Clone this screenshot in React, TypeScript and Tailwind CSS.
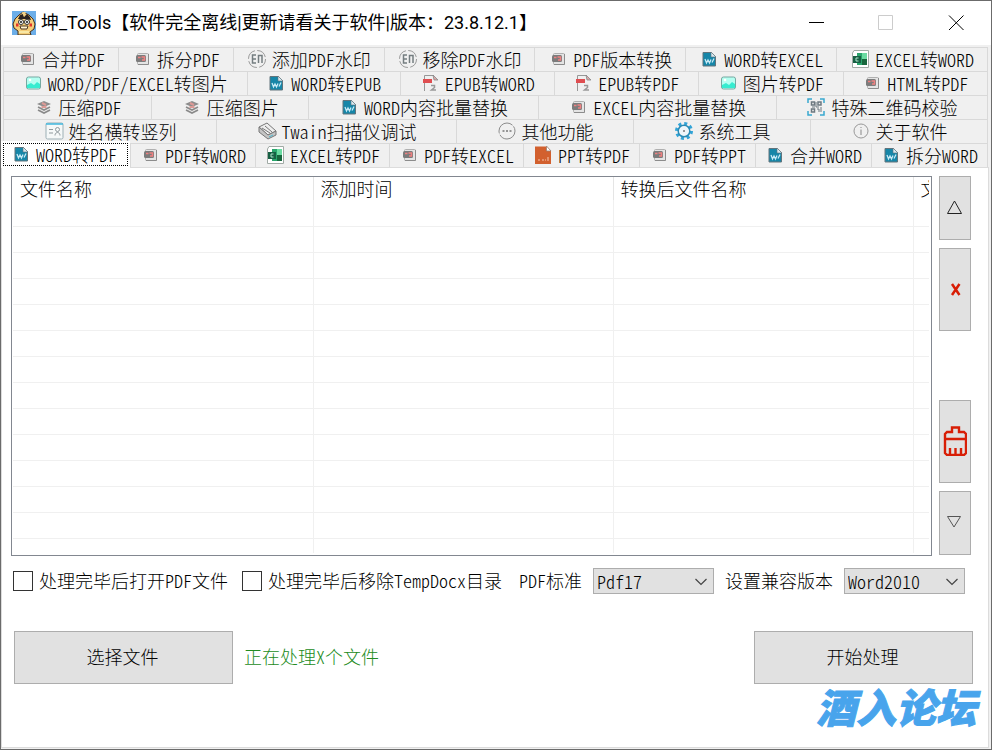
import { useState } from "react";
import type { ReactNode } from "react";

type IconName =
  | "pdf" | "watermark" | "word" | "excel" | "image" | "epub" | "compress"
  | "idcard" | "scanner" | "more" | "gear" | "qr" | "info" | "ppt";

type Tab = { label: string; icon: IconName };

const TAB_ROWS: Tab[][] = [
  [
    { label: "合并PDF", icon: "pdf" },
    { label: "拆分PDF", icon: "pdf" },
    { label: "添加PDF水印", icon: "watermark" },
    { label: "移除PDF水印", icon: "watermark" },
    { label: "PDF版本转换", icon: "pdf" },
    { label: "WORD转EXCEL", icon: "word" },
    { label: "EXCEL转WORD", icon: "excel" },
  ],
  [
    { label: "WORD/PDF/EXCEL转图片", icon: "image" },
    { label: "WORD转EPUB", icon: "word" },
    { label: "EPUB转WORD", icon: "epub" },
    { label: "EPUB转PDF", icon: "epub" },
    { label: "图片转PDF", icon: "image" },
    { label: "HTML转PDF", icon: "pdf" },
  ],
  [
    { label: "压缩PDF", icon: "compress" },
    { label: "压缩图片", icon: "compress" },
    { label: "WORD内容批量替换", icon: "word" },
    { label: "EXCEL内容批量替换", icon: "pdf" },
    { label: "特殊二维码校验", icon: "qr" },
  ],
  [
    { label: "姓名横转竖列", icon: "idcard" },
    { label: "Twain扫描仪调试", icon: "scanner" },
    { label: "其他功能", icon: "more" },
    { label: "系统工具", icon: "gear" },
    { label: "关于软件", icon: "info" },
  ],
  [
    { label: "WORD转PDF", icon: "word" },
    { label: "PDF转WORD", icon: "pdf" },
    { label: "EXCEL转PDF", icon: "excel" },
    { label: "PDF转EXCEL", icon: "pdf" },
    { label: "PPT转PDF", icon: "ppt" },
    { label: "PDF转PPT", icon: "pdf" },
    { label: "合并WORD", icon: "word" },
    { label: "拆分WORD", icon: "word" },
  ],
];

const ICONS: Record<IconName, ReactNode> = {
  pdf: (
    <>
      <rect x="7.500" y="6.500" width="11" height="11" rx="1" fill="#e4e4e4" stroke="#b0b0b0" />
      <path d="M18.500 7v10.500H8" fill="none" stroke="#8c8c8c" />
      <rect x="6" y="8" width="10" height="7" rx="1.500" fill="#7c7c7c" />
      <path d="M8 10.500h2.500M11.500 10h3v3H12" fill="none" stroke="#f08080" strokeWidth="1.500" />
    </>
  ),
  watermark: (
    <>
      <circle cx="12" cy="12" r="8.500" fill="none" stroke="#9a9a9a" strokeDasharray="11 2.350" />
      <path d="M11 8H7.500v8H11M7.500 12H11M13.500 16V8.500h3.500V16" fill="none" stroke="#747d80" strokeWidth="1.500" />
    </>
  ),
  word: (
    <>
      <path d="M6 5.500h8.500l4 4v9.500H6z" fill="#1686a8" stroke="#62747c" />
      <path d="M14 5v5h5z" fill="#d7e9f0" stroke="#62747c" strokeWidth=".6" />
      <path d="M8 12l1.500 4 1.500-3 1.500 3 1.500-3.500M15 15.500l2-4" fill="none" stroke="#c8eaf6" strokeWidth="1.300" />
    </>
  ),
  excel: (
    <>
      <path d="M6 3.500h14.500v17h-16V6z" fill="#fff" stroke="#a0aaa5" />
      <path d="M9 6h10v12H9z" fill="#29a56c" />
      <path d="M14 6h5v6h-5z" fill="#6bdba2" />
      <path d="M14 12h5v6h-5z" fill="#17663d" />
      <path d="M5 9h8v7H5z" fill="#176044" />
      <path d="M10.500 11H8v3h2.500" fill="none" stroke="#aee5cb" />
    </>
  ),
  image: (
    <>
      <rect x="5.500" y="6" width="14" height="12" rx="2" fill="#b5fff1" stroke="#76a9a2" />
      <path d="M6 14l4-2 3 2 3-3 3 2v4H6z" fill="#36ecd0" />
      <circle cx="9" cy="9" r="1.300" fill="#fff" />
    </>
  ),
  epub: (
    <>
      <path d="M6.500 20V4.500H16" fill="none" stroke="#979797" />
      <path d="M15 4l5 5h-4z" fill="#d9a9a9" stroke="#888" strokeWidth=".8" />
      <path d="M5 8h9v4H5z" fill="#df4e51" />
      <path d="M13 14.500h3.500v2l-3 2.500H18" fill="none" stroke="#999" strokeWidth="1.500" />
    </>
  ),
  compress: (
    <>
      <path d="M5 9l7-3 7 3-7 3z" fill="#8d8d8d" />
      <path d="M6 12l6 3 6-3M6 15l6 3 6-3" fill="none" stroke="#8a8a8a" strokeWidth="1.700" />
      <path d="M10 8l4 2M9.500 12h5" stroke="#dc9a96" strokeWidth="2" />
    </>
  ),
  idcard: (
    <>
      <rect x="4" y="4" width="17" height="16" rx="1.500" fill="#f5f8f8" stroke="#9cafb5" />
      <path d="M4 5h17" stroke="#40b9df" strokeWidth="1.500" />
      <path d="M7 10.500h4M7 14h4M13 16.500c0-4 5-4 5 0" fill="none" stroke="#8f999d" />
      <circle cx="15.500" cy="10.500" r="2" fill="none" stroke="#8f999d" />
    </>
  ),
  scanner: (
    <>
      <path d="M4 8l8-4 9 8-8 4z" fill="#eee" stroke="#777" />
      <path d="M4 8v5l9 7 8-4v-4l-8 4z" fill="#c4c4c4" stroke="#777" />
      <path d="M7 9l8 5M10 7l7 6" fill="none" stroke="#777" />
      <path d="M14 18l4-2" stroke="#4bb8cf" />
    </>
  ),
  more: (
    <>
      <circle cx="12" cy="12" r="8" fill="none" stroke="#8c8c8c" strokeDasharray="21 1.500" />
      <path d="M7.500 12h2M11 12h2M14.500 12h2" stroke="#777" strokeWidth="1.500" />
    </>
  ),
  gear: (
    <>
      <circle cx="12" cy="12" r="7.500" fill="none" stroke="#32a4d8" strokeWidth="3" strokeDasharray="3 2.890" />
      <circle cx="12" cy="12" r="5.800" fill="#eef6fa" stroke="#298bb5" strokeWidth="1.500" />
      <circle cx="12" cy="12" r="1" fill="#777" />
    </>
  ),
  qr: (
    <>
      <path d="M4 8V4h4M16 4h4v4M4 16v4h4M20 16v4h-4" fill="none" stroke="#38a8cf" strokeWidth="1.500" />
      <path d="M7.500 7h3v3h-3zM14 7h3v3h-3zM7.500 14h3v3h-3z" fill="none" stroke="#6c7880" strokeWidth="1.500" />
      <path d="M12 7v5h3M8 12h3M13 14h2v3M17 12v5" fill="none" stroke="#6c7880" />
    </>
  ),
  info: (
    <>
      <circle cx="12" cy="12" r="7" fill="none" stroke="#999" />
      <path d="M12 10.500V16M12 8v1" stroke="#888" />
    </>
  ),
  ppt: (
    <>
      <path d="M4 3.500h11.500L20 8v13H4z" fill="#d2602e" />
      <path d="M15.500 3v5H20z" fill="#fff" stroke="#9c8174" strokeWidth=".8" />
      <path d="M7 17h2M11 17h2M14 17h1M17 14v4" stroke="#f5c4ac" />
    </>
  ),
};

function TabIcon({ name }: { name: IconName }) {
  return (
    <svg viewBox="0 0 24 24" className="h-6 w-6 shrink-0" aria-hidden="true">
      {ICONS[name]}
    </svg>
  );
}

function AppLogo() {
  return (
    <svg viewBox="0 0 24 24" className="h-6 w-6 shrink-0" aria-hidden="true">
      <path d="M0 0h24v24H0z" fill="#6caee8" />
      <path d="M6 24v-4l-4-3-1-4 2-5 4-4 4-3 2 1 4 2 4 4 2 5-1 5-4 3 1 3z" fill="#f4cd79" stroke="#46301d" />
      <path d="M6 8l2-4 3-1 1 3 3-3 3 3 1 3-6-1z" fill="#2b2320" />
      <path d="M10 1l2 5 2-5z" fill="#f2d28a" />
      <ellipse cx="9" cy="11" rx="2.500" ry="2.500" fill="#fff" stroke="#333" />
      <ellipse cx="15" cy="11" rx="2.500" ry="2.500" fill="#fff" stroke="#333" />
      <path d="M9 10v2M15 10v2" stroke="#111" strokeWidth="1.500" />
      <path d="M4 14h2.500M17.500 14H20" stroke="#e2342b" strokeWidth="3" />
      <path d="M8 15h8l-1 3H9z" fill="#fff3cf" stroke="#4c3421" />
      <path d="M7 21h10" stroke="#f8e8a6" strokeWidth="2" />
    </svg>
  );
}

function TitleBar() {
  return (
    <header className="flex h-11 items-center bg-white pl-[11px]">
      <AppLogo />
      <h1 className="ml-[5px] flex-1 font-['Roboto','Noto_Sans_CJK_SC',sans-serif] text-[18px] leading-6 font-normal">
        坤_Tools【软件完全离线|更新请看关于软件|版本：23.8.12.1】
      </h1>
      <button type="button" aria-label="最小化" className="flex h-full w-[70px] items-center justify-center">
        <svg viewBox="0 0 16 16" className="h-4 w-4"><path d="M1 7.500h15" stroke="#000" /></svg>
      </button>
      <button type="button" aria-label="最大化" disabled className="flex h-full w-[70px] items-center justify-center">
        <svg viewBox="0 0 16 16" className="h-4 w-4"><path d="M.5.5h14v14H.5z" fill="none" stroke="#ccc" /></svg>
      </button>
      <button type="button" aria-label="关闭" className="flex h-full w-[70px] items-center justify-center">
        <svg viewBox="0 0 16 16" className="h-4 w-4"><path d="M1 .5l14.500 14.500M15.500.5L1 15" stroke="#000" /></svg>
      </button>
    </header>
  );
}

function TabStrip({ active, onSelect }: { active: string; onSelect: (label: string) => void }) {
  return (
    <div role="tablist" className="mt-0.5 mr-[3px] ml-0.5 border-r border-[#d9d9d9] leading-5">
      {TAB_ROWS.map((row) => (
        <div key={row[0].label} className="flex h-6">
          {row.map((tab) => {
            const selected = tab.label === active;
            return (
              <button
                key={tab.label}
                type="button"
                role="tab"
                aria-selected={selected}
                onClick={() => onSelect(tab.label)}
                className={
                  selected
                    ? "z-10 -mt-0.5 -mb-px -ml-0.5 flex flex-auto items-center justify-center gap-[3px] bg-white pr-1.5 pb-0.5 pl-px whitespace-nowrap outline-1 -outline-offset-3 outline-black outline-dotted"
                    : "flex flex-auto items-center justify-center gap-[3px] overflow-hidden border-t border-l border-[#d9d9d9] pr-0.5 pb-0.5 whitespace-nowrap"
                }
              >
                <TabIcon name={tab.icon} />
                <span>{tab.label}</span>
              </button>
            );
          })}
        </div>
      ))}
    </div>
  );
}

const COLUMNS = ["文件名称", "添加时间", "转换后文件名称", "文"];
const EMPTY_ROWS = 14;

function FileList() {
  return (
    <div className="h-[380px] min-w-0 flex-1 border border-[#828790] pr-0.5 pl-px">
      <div className="overflow-x-clip">
        <table className="w-[1200px] table-fixed border-collapse">
          <thead>
            <tr className="h-[23px] leading-[23px]">
              {COLUMNS.map((name) => (
                <th key={name} scope="col" className="w-[300px] border-r border-[#e5e5e5] px-[7px] text-left font-light">
                  {name}
                </th>
              ))}
            </tr>
          </thead>
          <tbody>
            {Array.from({ length: EMPTY_ROWS }, (_, i) => (
              <tr key={i} className="h-[26px] border-b border-[#f0f0f0] last:h-[15px] last:border-b-0">
                {COLUMNS.map((name) => (
                  <td key={name} className="border-r border-[#f0f0f0]" />
                ))}
              </tr>
            ))}
          </tbody>
        </table>
      </div>
    </div>
  );
}

function SideButton({ label, tall, children }: { label: string; tall?: boolean; children: ReactNode }) {
  return (
    <button
      type="button"
      aria-label={label}
      className={`flex w-8 items-center justify-center border border-[#adadad] bg-[#e1e1e1] pr-px pb-0.5 ${tall ? "h-[83px]" : "h-16"}`}
    >
      {children}
    </button>
  );
}

function SideButtons() {
  return (
    <div className="flex flex-col justify-between pb-px">
      <div className="flex flex-col gap-2">
        <SideButton label="上移">
          <svg viewBox="0 0 16 16" className="h-4 w-4"><path d="M7.500 2L.5 14.500h14z" fill="none" stroke="#222" /></svg>
        </SideButton>
        <SideButton label="删除" tall>
          <svg viewBox="0 0 16 16" className="h-4 w-4"><path d="M5 3l7.500 11M12.500 3L5 14" stroke="#d81e06" strokeWidth="2.500" /></svg>
        </SideButton>
      </div>
      <div className="flex flex-col gap-2">
        <SideButton label="清空" tall>
          <svg viewBox="0 0 24 30" className="h-[30px] w-6 shrink-0" fill="none" stroke="#d81e06" strokeWidth="2.400">
            <path d="M9 6V1.500h7V6h5l2 2v19l-2 2H4l-2-2V8l2-2zM2 13h21M7 22v7M12.500 22v7M18 22v7" />
          </svg>
        </SideButton>
        <SideButton label="下移">
          <svg viewBox="0 0 16 16" className="h-4 w-4"><path d="M.5 2.500h13L7 13z" fill="none" stroke="#555" /></svg>
        </SideButton>
      </div>
    </div>
  );
}

function CheckField({ id, label }: { id: string; label: string }) {
  return (
    <div className="flex items-center gap-1.5">
      <input id={id} type="checkbox" className="h-5 w-5 appearance-none border border-[#333] bg-white checked:bg-[#333]" />
      <label htmlFor={id} className="pb-0.5">{label}</label>
    </div>
  );
}

function SelectField({ id, label, options }: { id: string; label: string; options: string[] }) {
  return (
    <div className="flex items-center gap-[11px]">
      <label htmlFor={id} className="pb-0.5">{label}</label>
      <div className="relative">
        <select id={id} className="h-[26px] w-[121px] appearance-none border border-[#adadad] bg-[#e1e1e1] pl-[3px]">
          {options.map((o) => (
            <option key={o}>{o}</option>
          ))}
        </select>
        <svg viewBox="0 0 12 8" className="pointer-events-none absolute top-2.5 right-[7px] h-2 w-3">
          <path d="M.5 1L6 6.500 11.500 1" fill="none" stroke="#444" strokeWidth="1.200" />
        </svg>
      </div>
    </div>
  );
}

export default function App() {
  const [active, setActive] = useState("WORD转PDF");

  return (
    <div className="flex min-h-screen flex-col border border-[#6b6b6b] bg-[#f0f0f0] font-['Noto_Sans_CJK_SC',sans-serif] text-[18px] leading-6 font-light text-black [font-feature-settings:'hwid']">
      <TitleBar />
      <TabStrip active={active} onSelect={setActive} />

      <main className="mr-0.5 mb-px flex-1 border border-[#dcdcdc] bg-white">
        <div className="flex gap-[7px] pt-2 pr-[17px] pl-[9px]">
          <FileList />
          <SideButtons />
        </div>

        <div className="mt-3 flex items-center pl-[11px] whitespace-nowrap">
          <CheckField id="open-after" label="处理完毕后打开PDF文件" />
          <div className="ml-3.5">
            <CheckField id="remove-temp" label="处理完毕后移除TempDocx目录" />
          </div>
          <div className="ml-[17px] flex items-center gap-[11px]">
            <SelectField id="pdf-standard" label="PDF标准" options={["Pdf17", "Pdf15", "PdfA1a"]} />
            <SelectField id="word-version" label="设置兼容版本" options={["Word2010", "Word2013", "Word2016"]} />
          </div>
        </div>

        <div className="mt-[37px] flex items-center pr-[15px] pl-3">
          <button type="button" className="h-[53px] w-[219px] border border-[#adadad] bg-[#e1e1e1] pr-0.5 pb-1">
            选择文件
          </button>
          <p className="ml-[11px] flex-1 pb-1 text-[#228b22]">正在处理X个文件</p>
          <button type="button" className="h-[53px] w-[219px] border border-[#adadad] bg-[#e1e1e1] pr-0.5 pb-1">
            开始处理
          </button>
        </div>

        <p className="mt-0.5 pr-3 text-right text-[40px] leading-10 font-black text-[#48a4ec] italic [-webkit-text-stroke:1px_#48a4ec]">
          酒入论坛
        </p>
      </main>
    </div>
  );
}
